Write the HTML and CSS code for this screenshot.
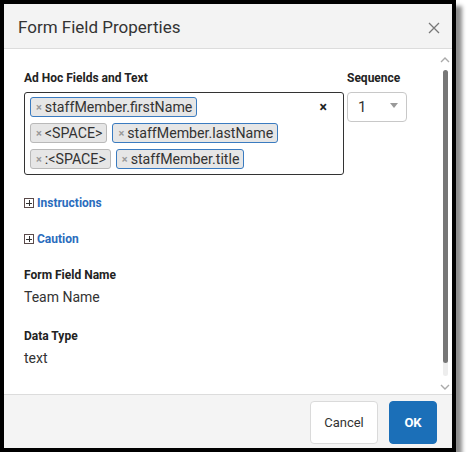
FILE: index.html
```html
<!DOCTYPE html>
<html>
<head>
<meta charset="utf-8">
<link rel="stylesheet" href="styles.css">
</head>
<body>
<div class="frame">
  <div class="dialog">
    <div class="header">
      <span class="title">Form Field Properties</span>
      <svg class="close" width="12" height="12" viewBox="0 0 12 12"><path d="M1 1L11 11M11 1L1 11" stroke="#777" stroke-width="1.3" fill="none"/></svg>
    </div>
    <div class="body">
      <div class="content">
        <div class="top-row">
          <div class="adhoc">
            <div class="label">Ad Hoc Fields and Text</div>
            <div class="tagbox">
              <div class="tagrow">
                <span class="tag field"><span class="x">×</span>staffMember.firstName</span>
                <span class="clear">×</span>
              </div>
              <div class="tagrow">
                <span class="tag"><span class="x">×</span>&lt;SPACE&gt;</span>
                <span class="tag field"><span class="x">×</span>staffMember.lastName</span>
              </div>
              <div class="tagrow">
                <span class="tag"><span class="x">×</span>:&lt;SPACE&gt;</span>
                <span class="tag field"><span class="x">×</span>staffMember.title</span>
              </div>
            </div>
          </div>
          <div class="sequence">
            <div class="label">Sequence</div>
            <div class="select"><span>1</span><span class="caret"></span></div>
          </div>
        </div>
        <div class="toggle first"><span class="plus"></span>Instructions</div>
        <div class="toggle"><span class="plus"></span>Caution</div>
        <div class="label field-label">Form Field Name</div>
        <div class="value">Team Name</div>
        <div class="label field-label">Data Type</div>
        <div class="value">text</div>
      </div>
      <div class="scrollbar">
        <svg class="arrow" width="10" height="6" viewBox="0 0 10 6"><path d="M1 5L5 1L9 5" stroke="#aaa" stroke-width="1.4" fill="none"/></svg>
        <div class="track"><div class="thumb"></div></div>
        <svg class="arrow" width="10" height="6" viewBox="0 0 10 6"><path d="M1 1L5 5L9 1" stroke="#aaa" stroke-width="1.4" fill="none"/></svg>
      </div>
    </div>
    <div class="footer">
      <button class="btn cancel">Cancel</button>
      <button class="btn ok">OK</button>
    </div>
  </div>
</div>
</body>
</html>
```
FILE: styles.css
```css
html, body {
  margin: 0;
  padding: 0;
  background: #ffffff;
}
body {
  font-family: Roboto, "Liberation Sans", sans-serif;
  color: #2b2b2b;
}
.frame {
  width: 448px;
  height: 444px;
  border: 4px solid #000;
  box-shadow: 6px 6px 4px rgba(0, 0, 0, 0.45);
}
.dialog {
  width: 448px;
  height: 444px;
  display: flex;
  flex-direction: column;
  background: #fff;
}
.header {
  height: 45px;
  flex: none;
  background: #f3f3f3;
  border-bottom: 1px solid #dcdcdc;
  display: flex;
  align-items: center;
  justify-content: space-between;
  padding: 2px 12px 0 14px;
  box-sizing: border-box;
}
.title {
  font-size: 17px;
  color: #333;
}
.close {
  margin-top: 2px;
}
.body {
  flex: 1;
  display: flex;
  overflow: hidden;
}
.content {
  flex: 1;
  padding: 22px 0 0 20px;
}
.top-row {
  display: flex;
  gap: 3px;
}
.label {
  font-size: 12px;
  font-weight: 700;
  line-height: 14px;
  color: #222;
}
.adhoc .label,
.sequence .label {
  margin-bottom: 7px;
}
.tagbox {
  width: 308px;
  height: 73px;
  border: 1px solid #333;
  border-radius: 3px;
  padding: 4px 5px 4px 5px;
  display: flex;
  flex-direction: column;
  gap: 6px;
}
.tagrow {
  display: flex;
  gap: 5px;
  align-items: center;
  height: 20px;
}
.tag {
  box-sizing: border-box;
  height: 20px;
  display: inline-flex;
  align-items: center;
  background: #e6e6e6;
  border: 1px solid #b9b9b9;
  border-radius: 3px;
  padding: 0 4px 0 5px;
  font-size: 14.2px;
  color: #333;
}
.tag.field {
  border-color: #3a7bc0;
}
.x {
  font-size: 11px;
  font-weight: 700;
  color: #999;
  margin-right: 3px;
}
.clear {
  margin-left: auto;
  margin-right: 11px;
  font-size: 14px;
  font-weight: 700;
  color: #222;
}
.select {
  box-sizing: border-box;
  width: 60px;
  height: 30px;
  border: 1px solid #c8c8c8;
  border-radius: 4px;
  display: flex;
  align-items: center;
  justify-content: space-between;
  padding: 0 8px 0 10px;
  font-size: 15px;
  color: #333;
}
.caret {
  width: 0;
  height: 0;
  border-left: 4px solid transparent;
  border-right: 4px solid transparent;
  border-top: 5px solid #999;
  margin-top: -4px;
}
.toggle {
  display: flex;
  align-items: center;
  font-size: 12px;
  font-weight: 700;
  line-height: 14px;
  color: #2a6cbd;
  margin-top: 22px;
}
.toggle.first {
  margin-top: 21px;
}
.plus {
  box-sizing: border-box;
  width: 10px;
  height: 10px;
  border: 1px solid #5a4a4a;
  margin-right: 3px;
  background:
    linear-gradient(#333, #333) center / 6px 1px no-repeat,
    linear-gradient(#333, #333) center / 1px 6px no-repeat;
}
.field-label {
  margin-top: 22px;
}
.value {
  font-size: 14px;
  line-height: 18px;
  margin-top: 6px;
  color: #333;
}
.value + .field-label {
  margin-top: 23px;
}
.scrollbar {
  width: 14px;
  flex: none;
  display: flex;
  flex-direction: column;
  align-items: center;
  padding: 8px 0 4px;
}
.arrow {
  flex: none;
}
.track {
  flex: 1;
  width: 5px;
  margin: 7px 0 8px;
  background: #ededed;
  border-radius: 3px;
  display: flex;
}
.thumb {
  width: 5px;
  height: 293px;
  background: #777;
  border-radius: 3px;
}
.footer {
  height: 54px;
  flex: none;
  background: #f4f4f4;
  border-top: 1px solid #dcdcdc;
  display: flex;
  justify-content: flex-end;
  align-items: flex-start;
  gap: 11px;
  padding: 6px 15px 0 0;
  box-sizing: border-box;
}
.btn {
  height: 43px;
  border-radius: 4px;
  font-family: Roboto, "Liberation Sans", sans-serif;
  font-size: 13px;
  cursor: pointer;
}
.cancel {
  width: 68px;
  background: #fff;
  border: 1px solid #dadada;
  color: #333;
}
.ok {
  width: 48px;
  background: #1b6fb8;
  border: 1px solid #1b6fb8;
  color: #fff;
  font-weight: 700;
}
```
